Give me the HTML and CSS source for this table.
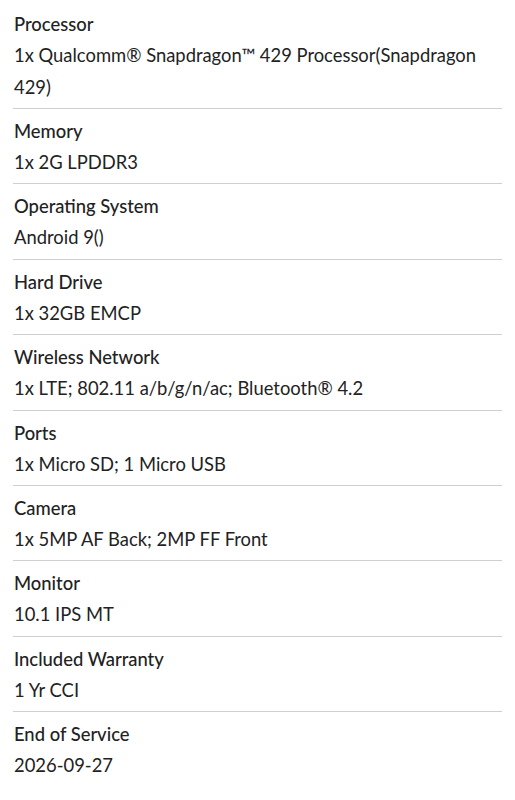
FILE: index.html
```html
<!DOCTYPE html>
<html>
<head>
<meta charset="utf-8">
<link rel="stylesheet" href="styles.css">
</head>
<body>
<div class="specs">
  <div class="row"><div class="label">Processor</div><div class="value">1x Qualcomm® Snapdragon™ 429 Processor(Snapdragon 429)</div></div>
  <div class="row"><div class="label">Memory</div><div class="value">1x 2G LPDDR3</div></div>
  <div class="row"><div class="label">Operating System</div><div class="value">Android 9()</div></div>
  <div class="row"><div class="label">Hard Drive</div><div class="value">1x 32GB EMCP</div></div>
  <div class="row"><div class="label">Wireless Network</div><div class="value">1x LTE; 802.11 a/b/g/n/ac; Bluetooth® 4.2</div></div>
  <div class="row"><div class="label">Ports</div><div class="value">1x Micro SD; 1 Micro USB</div></div>
  <div class="row"><div class="label">Camera</div><div class="value">1x 5MP AF Back; 2MP FF Front</div></div>
  <div class="row"><div class="label">Monitor</div><div class="value">10.1 IPS MT</div></div>
  <div class="row"><div class="label">Included Warranty</div><div class="value">1 Yr CCI</div></div>
  <div class="row last"><div class="label">End of Service</div><div class="value">2026-09-27</div></div>
</div>
</body>
</html>
```
FILE: styles.css
```css
html, body {
  margin: 0;
  padding: 0;
  background: #fff;
}
body {
  font-family: Lato, "Open Sans", sans-serif;
  color: #222;
}
.specs {
  padding: 1.6px 13px 0 13px;
}
.row {
  padding: 7px 0 5.4px 1px;
  border-bottom: 1px solid #cfcfcf;
}
.row.last {
  border-bottom: none;
}
.label {
  font-size: 18.4px;
  font-weight: 500;
  line-height: 30px;
}
.value {
  font-size: 18.4px;
  line-height: 32px;
}
```
